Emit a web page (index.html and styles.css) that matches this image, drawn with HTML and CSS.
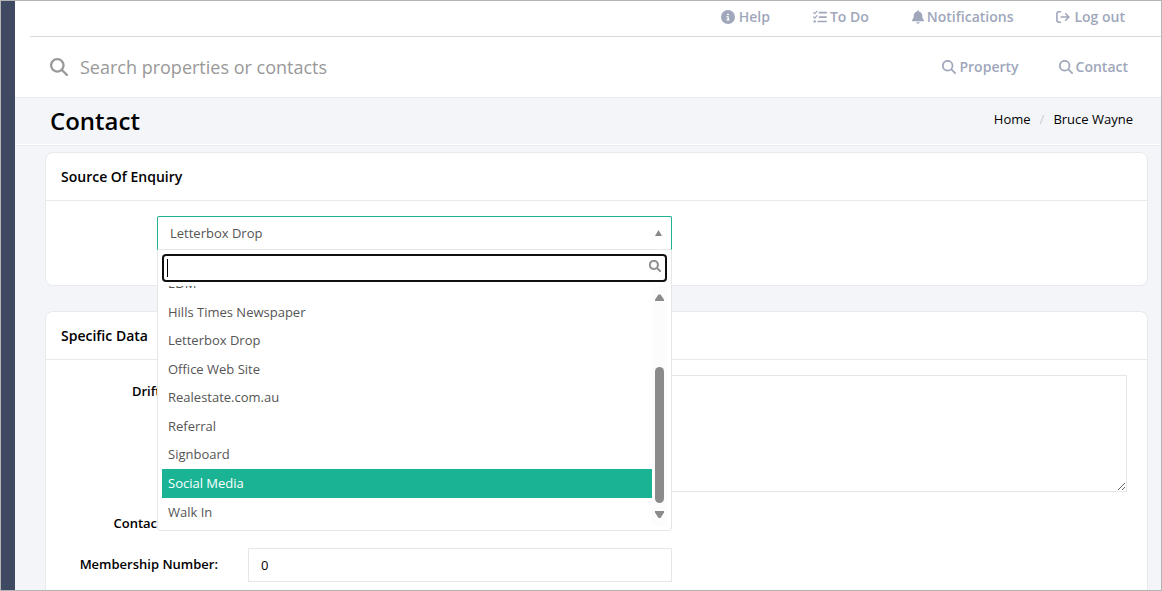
FILE: index.html
```html
<!DOCTYPE html>
<html lang="en">
    <head>
        <meta charset="utf-8">
        <meta name="viewport" content="width=device-width, initial-scale=1">
        <title>Contact - Bruce Wayne</title>
        <link rel="stylesheet" href="styles.css">
    </head>
    <body>
        <!-- shared icons -->
        <svg class="icon-defs" width="0" height="0" aria-hidden="true">
            <symbol id="icon-search" viewBox="0 0 512 512">
                <path d="M416 208c0 45.900-14.900 88.300-40 122.700L502.600 457.400c12.500 12.500 12.500 32.800 0 45.300s-32.800 12.500-45.300 0L330.700 376c-34.400 25.200-76.800 40-122.700 40C93.100 416 0 322.900 0 208S93.100 0 208 0S416 93.100 416 208zM208 352a144 144 0 1 0 0-288 144 144 0 1 0 0 288z"/>
            </symbol>
        </svg>
        <div class="wrapper">
            <aside class="sidebar"></aside>
            <main class="page">
                <nav class="top-nav">
                    <a href="#">
                        <svg class="icon icon-help" viewBox="0 0 512 512"><path fill-rule="evenodd" d="M256 512A256 256 0 1 0 256 0a256 256 0 1 0 0 512zM216 336h24V272H216c-13 0-24-11-24-24s11-24 24-24h48c13 0 24 11 24 24v88h8c13 0 24 11 24 24s-11 24-24 24H216c-13 0-24-11-24-24s11-24 24-24zm40-208a32 32 0 1 1 0 64 32 32 0 1 1 0-64z"/></svg>
                        Help
                    </a>
                    <a href="#">
                        <svg class="icon icon-tight" viewBox="0 0 14 14"><g fill="none" stroke="currentColor" stroke-linecap="round" stroke-linejoin="round"><path stroke-width="1.200" d="M.7 2.600l1.100 1.100L4 1.300M.7 7l1.100 1.100L4 5.700"/><path stroke-width="1.700" d="M6.500 2.700h6.600M6.500 7.100h6.600M5.200 11.500h7.900"/></g><circle cx="1.700" cy="11.500" r="1.200"/></svg>
                        To Do
                    </a>
                    <a href="#">
                        <svg class="icon icon-bell" viewBox="0 0 448 512"><path d="M224 0c-17.700 0-32 14.300-32 32V51.200C119 66 64 130.600 64 208v18.800c0 47-17.300 92.400-48.500 127.600l-7.400 8.300c-8.400 9.400-10.400 22.900-5.300 34.400S19.400 416 32 416H416c12.600 0 24-7.400 29.200-18.900s3.100-25-5.300-34.400l-7.400-8.300C401.300 319.200 384 273.900 384 226.800V208c0-77.400-55-142-128-156.800V32c0-17.700-14.300-32-32-32zm45.300 493.300c12-12 18.700-28.300 18.700-45.300H160c0 17 6.700 33.300 18.700 45.300s28.300 18.700 45.300 18.700s33.300-6.700 45.300-18.700z"/></svg>
                        Notifications
                    </a>
                    <a href="#">
                        <svg class="icon" viewBox="0 0 14 14"><path fill="none" stroke="currentColor" stroke-width="1.600" stroke-linecap="round" stroke-linejoin="round" d="M4.500 1.800H3A2.200 2.200 0 0 0 .9 4v6A2.200 2.200 0 0 0 3 12.200h1.500M5.200 7h7.600M9.700 3.800L12.900 7l-3.200 3.200"/></svg>
                        Log out
                    </a>
                </nav>
                <header class="search-bar">
                    <label class="search-label" for="top-search">
                        <svg class="icon-large"><use href="#icon-search"/></svg>
                    </label>
                    <input class="search-input" id="top-search" type="text" placeholder="Search properties or contacts" aria-label="Search properties or contacts">
                    <div class="search-links">
                        <a href="#"><svg class="icon icon-tight"><use href="#icon-search"/></svg>Property</a>
                        <a href="#"><svg class="icon icon-tight"><use href="#icon-search"/></svg>Contact</a>
                    </div>
                </header>
                <div class="page-heading">
                    <h2>Contact</h2>
                    <ol class="breadcrumb">
                        <li><a href="#">Home</a></li>
                        <li><a href="#">Bruce Wayne</a></li>
                    </ol>
                </div>
                <div class="content">
                    <section class="card card-source">
                        <h5 class="card-title">Source Of Enquiry</h5>
                        <div class="card-body">
                            <div class="picker">
                                <select class="picker-select" aria-label="Source Of Enquiry">
                                    <option>Letterbox Drop</option>
                                </select>
                                <svg class="picker-arrow" viewBox="0 0 7 6"><path d="M3.500 0L7 6H0z"/></svg>
                                <div class="picker-menu">
                                    <div class="picker-search">
                                        <input type="text" aria-label="Filter sources">
                                        <svg class="picker-search-icon"><use href="#icon-search"/></svg>
                                    </div>
                                    <div class="picker-results">
                                        <ul class="picker-list" role="listbox" aria-label="Sources">
                                            <li role="option">EDM</li>
                                            <li role="option">Hills Times Newspaper</li>
                                            <li role="option">Letterbox Drop</li>
                                            <li role="option">Office Web Site</li>
                                            <li role="option">Realestate.com.au</li>
                                            <li role="option">Referral</li>
                                            <li role="option">Signboard</li>
                                            <li role="option" class="active" aria-selected="true">Social Media</li>
                                            <li role="option">Walk In</li>
                                        </ul>
                                        <div class="scroll-track">
                                            <svg class="scroll-arrow" viewBox="0 0 9 7"><path d="M3.500.5h2L9 5.500V7H0V5.500z"/></svg>
                                            <div class="scroll-thumb"></div>
                                            <svg class="scroll-arrow" viewBox="0 0 9 7"><path d="M0 0h9v1.500L5.500 7h-2L0 1.500z"/></svg>
                                        </div>
                                    </div>
                                </div>
                            </div>
                        </div>
                    </section>
                    <section class="card">
                        <h5 class="card-title">Specific Data</h5>
                        <div class="card-body">
                            <div class="form-row">
                                <label for="drift">Drift Address:</label>
                                <textarea class="field" id="drift"></textarea>
                            </div>
                            <div class="form-row">
                                <span class="row-label">Contact Method:</span>
                            </div>
                            <div class="form-row">
                                <label for="membership">Membership Number:</label>
                                <input class="field field-short" id="membership" type="text" value="0">
                            </div>
                        </div>
                    </section>
                </div>
            </main>
        </div>
    </body>
</html>
```
FILE: styles.css
```css
* {
	box-sizing: border-box;
}
body {
	margin: 0;
	font-family: "Open Sans", "Noto Sans", sans-serif;
	font-size: 13px;
	line-height: 18px;
	color: #000;
	background-color: #f3f5f9;
}
a {
	color: inherit;
	text-decoration: none;
}
svg {
	display: block;
	fill: currentColor;
}
.icon-defs {
	position: absolute;
}
.wrapper {
	display: flex;
	height: 100vh;
	overflow: hidden;
	border: 1px solid #b4b4b4;
}
.sidebar {
	flex: 0 0 14px;
	background-color: #3f4961;
}
.page {
	flex: 1;
	min-width: 0;
}

/* top bars */
.top-nav,
.search-bar {
	display: flex;
	align-items: center;
	background-color: #fff;
	color: #a0a7bb;
	font-size: 14px;
	font-weight: 600;
}
.top-nav {
	justify-content: flex-end;
	gap: 43px;
	height: 36px;
	padding: 0 36px 4px 0;
	border-left: 15px solid #fff;
	background: linear-gradient(#d9d9d9, #d9d9d9) bottom / 100% 1px no-repeat #fff;
	background-clip: padding-box;
}
.top-nav a,
.search-links a {
	display: flex;
	align-items: center;
	white-space: nowrap;
}
.icon {
	width: 14px;
	height: 14px;
	margin-right: 4px;
}
.icon-tight {
	margin-right: 3px;
}
.icon-bell {
	width: 12px;
	margin-right: 3px;
}
.search-bar {
	height: 61px;
	padding: 0 33px 0 35px;
	border-bottom: 1px solid #e7eaec;
}
.icon-large {
	width: 18px;
	height: 18px;
	color: #999;
}
.search-input {
	flex: 1;
	min-width: 0;
	height: 40px;
	padding: 0 12px;
	border: 0;
	background: none;
	font: 18px "Open Sans", "Noto Sans", sans-serif;
}
.search-input::placeholder {
	color: #999;
	opacity: 1;
}
.search-links {
	display: flex;
	gap: 40px;
}

.page-heading {
	display: flex;
	justify-content: space-between;
	align-items: center;
	height: 48px;
	padding: 0 28px 2px 35px;
	border-bottom: 1px solid #e7eaec;
	box-shadow: inset 0 -1px #fff;
}
.page-heading h2 {
	margin: 0;
	font-size: 24px;
	font-weight: 600;
	line-height: 30px;
}
.breadcrumb {
	display: flex;
	margin: 0;
	padding: 0 0 4px;
	list-style: none;
}
.breadcrumb li + li::before {
	content: "/";
	padding: 0 9px;
	color: #ccc;
}

/* cards */
.content {
	padding: 6px 13px 0 30px;
}
.card {
	margin-bottom: 25px;
	border: 1px solid #e7eaec;
	border-radius: 8px;
	background-color: #fff;
}
.card-source {
	min-height: 134px;
}
.card-title {
	margin: 0;
	padding: 15px 15px 14px;
	border-bottom: 1px solid #e7eaec;
	font-size: 14px;
	font-weight: 600;
}
.card-body {
	padding: 15px 20px;
}

/* source drop-down */
.picker {
	position: relative;
	max-width: 515px;
	margin-left: 91px;
}
.picker-select {
	display: block;
	width: 100%;
	height: 34px;
	padding: 0 12px;
	appearance: none;
	border: 1px solid #1ab394;
	border-bottom-color: #e5e6e7;
	border-radius: 2px 2px 0 0;
	background-color: #fff;
	color: #555;
	font: inherit;
}
.picker-arrow {
	position: absolute;
	top: 14px;
	right: 10px;
	width: 7px;
	height: 6px;
	color: #888;
}
.picker-menu {
	position: absolute;
	z-index: 10;
	top: 34px;
	left: 0;
	width: 100%;
	padding: 4px;
	border: 1px solid #e5e6e7;
	border-top: 0;
	border-radius: 0 0 4px 4px;
	background-color: #fff;
	color: #555;
}
.picker-search {
	position: relative;
	margin-bottom: 4px;
}
.picker-search input {
	display: block;
	width: 100%;
	height: 28px;
	padding: 0 24px 0 4px;
	border: 2px solid #101010;
	border-radius: 4px;
	background: linear-gradient(#000, #000) 3px 3px / 1px 18px no-repeat #fff;
	font: inherit;
	outline: 0;
}
.picker-search-icon {
	position: absolute;
	top: 6px;
	right: 6px;
	width: 12px;
	height: 12px;
	color: #888;
	stroke: currentColor;
	stroke-width: 20px;
	overflow: visible;
}
.picker-results {
	display: flex;
	align-items: flex-end;
	height: 240px;
	overflow: hidden;
}
.picker-list {
	display: flex;
	flex: 1;
	flex-direction: column;
	height: 257px;
	margin: 0;
	padding: 0;
	list-style: none;
}
.picker-list li {
	flex: 1;
	padding: 5px 6px;
}
.picker-list .active {
	background-color: #1ab394;
	color: #fff;
}
.scroll-track {
	display: flex;
	flex-direction: column;
	align-items: center;
	width: 15px;
	height: 240px;
	padding: 8px 0;
	background-color: #fcfcfc;
	color: #8b8b8b;
}
.scroll-arrow {
	width: 9px;
	height: 7px;
}
.scroll-thumb {
	width: 9px;
	height: 136px;
	margin: auto 0 8px;
	border-radius: 5px;
	background-color: #8b8b8b;
}

/* form */
.form-row {
	display: flex;
	gap: 30px;
	min-height: 26px;
	margin-bottom: 15px;
}
.form-row label,
.row-label {
	flex: 0 0 152px;
	padding-top: 7px;
	font-weight: 600;
	text-align: right;
}
.field {
	flex: 1;
	min-width: 0;
	height: 34px;
	padding: 6px 12px;
	border: 1px solid #e5e6e7;
	background-color: #fff;
	font: inherit;
}
textarea.field {
	height: 117px;
}
.field-short {
	max-width: 424px;
}
```
